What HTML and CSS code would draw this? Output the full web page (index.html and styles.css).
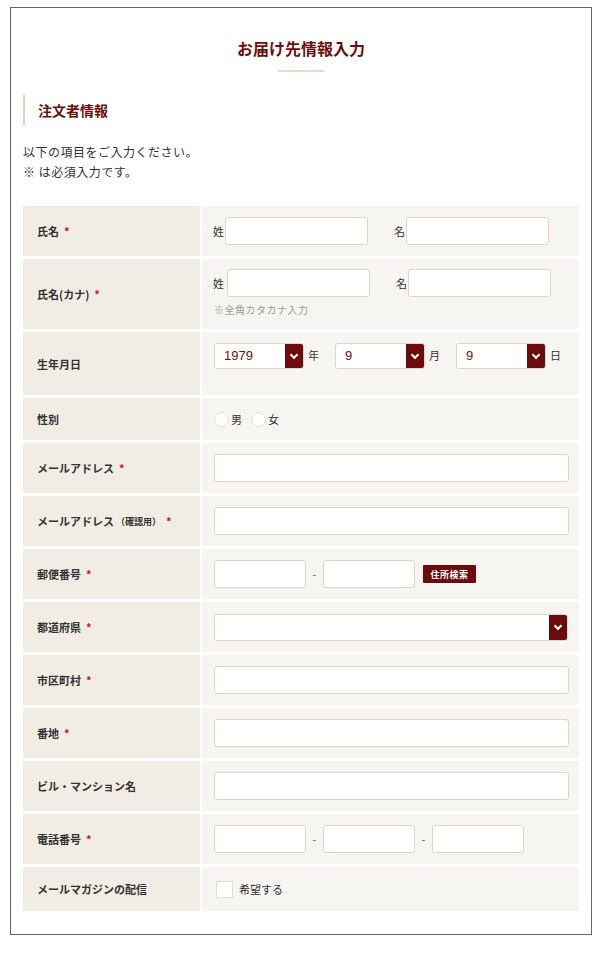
FILE: index.html
```html
<!DOCTYPE html>
<html lang="ja">
<head>
    <meta charset="UTF-8">
    <meta name="viewport" content="width=device-width, initial-scale=1.0">
    <title>お届け先情報入力</title>
    <link rel="stylesheet" href="styles.css">
</head>
<body>
    <div class="frame">
        <h1 class="page-title">お届け先情報入力</h1>

        <h2 class="section-title">注文者情報</h2>

        <p class="intro">以下の項目をご入力ください。<br>※ は必須入力です。</p>

        <div class="form-table">
            <div class="label">氏名<span class="req">*</span></div>
            <div class="value">
                <div class="pair">
                    <span class="pre">姓</span><input type="text" class="field name">
                </div>
                <div class="pair">
                    <span class="pre">名</span><input type="text" class="field name">
                </div>
            </div>

            <div class="label">氏名(カナ)<span class="req">*</span></div>
            <div class="value stack">
                <div class="line">
                    <div class="pair kana">
                        <span class="pre">姓</span><input type="text" class="field name">
                    </div>
                    <div class="pair">
                        <span class="pre">名</span><input type="text" class="field name">
                    </div>
                </div>
                <p class="note">※全角カタカナ入力</p>
            </div>

            <div class="label">生年月日</div>
            <div class="value birth">
                <div class="select small"><span>1979</span><i class="arrow"></i></div><span class="unit">年</span>
                <div class="select small"><span>9</span><i class="arrow"></i></div><span class="unit">月</span>
                <div class="select small"><span>9</span><i class="arrow"></i></div><span class="unit">日</span>
            </div>

            <div class="label">性別</div>
            <div class="value tight">
                <label class="radio"><i></i>男</label>
                <label class="radio"><i></i>女</label>
            </div>

            <div class="label">メールアドレス<span class="req">*</span></div>
            <div class="value"><input type="text" class="field wide"></div>

            <div class="label">メールアドレス<small>（確認用）</small><span class="req">*</span></div>
            <div class="value"><input type="text" class="field wide"></div>

            <div class="label">郵便番号<span class="req">*</span></div>
            <div class="value">
                <input type="text" class="field short"><span class="dash">-</span><input type="text" class="field short">
                <button class="zip-btn">住所検索</button>
            </div>

            <div class="label">都道府県<span class="req">*</span></div>
            <div class="value"><div class="select full"><span></span><i class="arrow"></i></div></div>

            <div class="label">市区町村<span class="req">*</span></div>
            <div class="value"><input type="text" class="field wide"></div>

            <div class="label">番地<span class="req">*</span></div>
            <div class="value"><input type="text" class="field wide"></div>

            <div class="label">ビル・マンション名</div>
            <div class="value"><input type="text" class="field wide"></div>

            <div class="label">電話番号<span class="req">*</span></div>
            <div class="value">
                <input type="text" class="field short"><span class="dash">-</span><input type="text" class="field short"><span class="dash">-</span><input type="text" class="field short">
            </div>

            <div class="label">メールマガジンの配信</div>
            <div class="value tight last">
                <label class="check"><i></i>希望する</label>
            </div>
        </div>
    </div>
</body>
</html>
```

FILE: styles.css
```css
* {
    margin: 0;
    padding: 0;
    box-sizing: border-box;
}

body {
    font-family: "Noto Sans CJK JP", "Noto Sans", sans-serif;
    background: #fff;
    color: #333;
}

.frame {
    width: 582px;
    height: 928px;
    margin: 7px 0 0 10px;
    border: 1px solid #666;
    padding: 29px 12px 0 12px;
}

.page-title {
    text-align: center;
    font-size: 16px;
    line-height: 22px;
    font-weight: 700;
    color: #6b1010;
}

.page-title::after {
    content: '';
    display: block;
    width: 46px;
    height: 2px;
    margin: 11px auto 0;
    background: #e6dcc8;
}

.section-title {
    margin-top: 23px;
    height: 30px;
    line-height: 30px;
    padding-left: 13px;
    border-left: 2px solid #ddd3bf;
    font-size: 14px;
    font-weight: 700;
    color: #6b1010;
}

.intro {
    margin-top: 17px;
    font-size: 12px;
    line-height: 20px;
    letter-spacing: 0.5px;
    color: #333;
}

.form-table {
    margin-top: 24px;
    display: grid;
    grid-template-columns: 177px 1fr;
    column-gap: 2px;
    row-gap: 3px;
}

.label {
    background: #f1ede5;
    display: flex;
    align-items: center;
    padding-left: 14px;
    font-size: 11px;
    font-weight: 700;
    color: #333;
}

.label small {
    font-size: 9px;
    margin-left: 2px;
}

.req {
    color: #c8141b;
    margin-left: 5px;
}

.value {
    background: #f6f5f2;
    display: flex;
    align-items: center;
    padding: 11px 0 11px 12px;
    min-height: 50px;
    font-size: 11px;
    color: #333;
}

.value.tight {
    padding-top: 6px;
    padding-bottom: 6px;
    min-height: 42px;
}

.value.last {
    min-height: 44px;
}

.value.stack {
    flex-direction: column;
    align-items: flex-start;
    padding-top: 10px;
    padding-bottom: 12px;
}

.line {
    display: flex;
}

.pair {
    display: flex;
    align-items: center;
}

.pair + .pair {
    margin-left: 27px;
}

.pre {
    margin-left: -1px;
    margin-right: 1px;
}

.pair.kana .pre {
    margin-right: 3px;
}

.field {
    height: 28px;
    background: #fff;
    border: 1px solid #ddd6c4;
    border-radius: 3px;
    outline: none;
}

.field.name {
    width: 143px;
}

.field.wide {
    width: 355px;
}

.field.short {
    width: 92px;
}

.note {
    margin-top: 6px;
    font-size: 10px;
    line-height: 14px;
    color: #999;
    letter-spacing: 0.5px;
}

.dash {
    width: 17px;
    text-align: center;
    color: #555;
}

.zip-btn {
    margin-left: 8px;
    width: 53px;
    height: 18px;
    border: none;
    border-radius: 1px;
    background: #6b0b0b;
    color: #fff;
    font-family: inherit;
    font-size: 9px;
    font-weight: 700;
    letter-spacing: 0.5px;
}

.value.birth {
    align-items: flex-start;
    padding-bottom: 26px;
}

.select {
    display: flex;
    height: 26px;
    background: #fff;
    border: 1px solid #ddd6c4;
    border-radius: 3px;
    overflow: hidden;
}

.select span {
    flex: 1;
    padding-left: 9px;
    line-height: 24px;
    font-family: "Liberation Sans", Arial, sans-serif;
    font-size: 13px;
    color: #6b1010;
}

.select.small {
    width: 90px;
}

.select.full {
    width: 354px;
    height: 27px;
}

.arrow {
    width: 18px;
    background: #6b0b0b;
    position: relative;
}

.arrow::after {
    content: '';
    position: absolute;
    left: 6px;
    top: 8px;
    width: 4px;
    height: 4px;
    border-right: 2px solid #fff;
    border-bottom: 2px solid #fff;
    transform: rotate(45deg);
}

.unit {
    width: 31px;
    padding-left: 4px;
    line-height: 24px;
}

.radio,
.check {
    display: flex;
    align-items: center;
}

.radio i {
    width: 15px;
    height: 15px;
    border-radius: 50%;
    background: #fff;
    border: 1px solid #e2ded6;
    margin-right: 2px;
}

.radio + .radio {
    margin-left: 9px;
}

.check {
    margin-left: 2px;
}

.check i {
    width: 17px;
    height: 17px;
    background: #fff;
    border: 1px solid #e0dcd2;
    margin-right: 6px;
}
```
